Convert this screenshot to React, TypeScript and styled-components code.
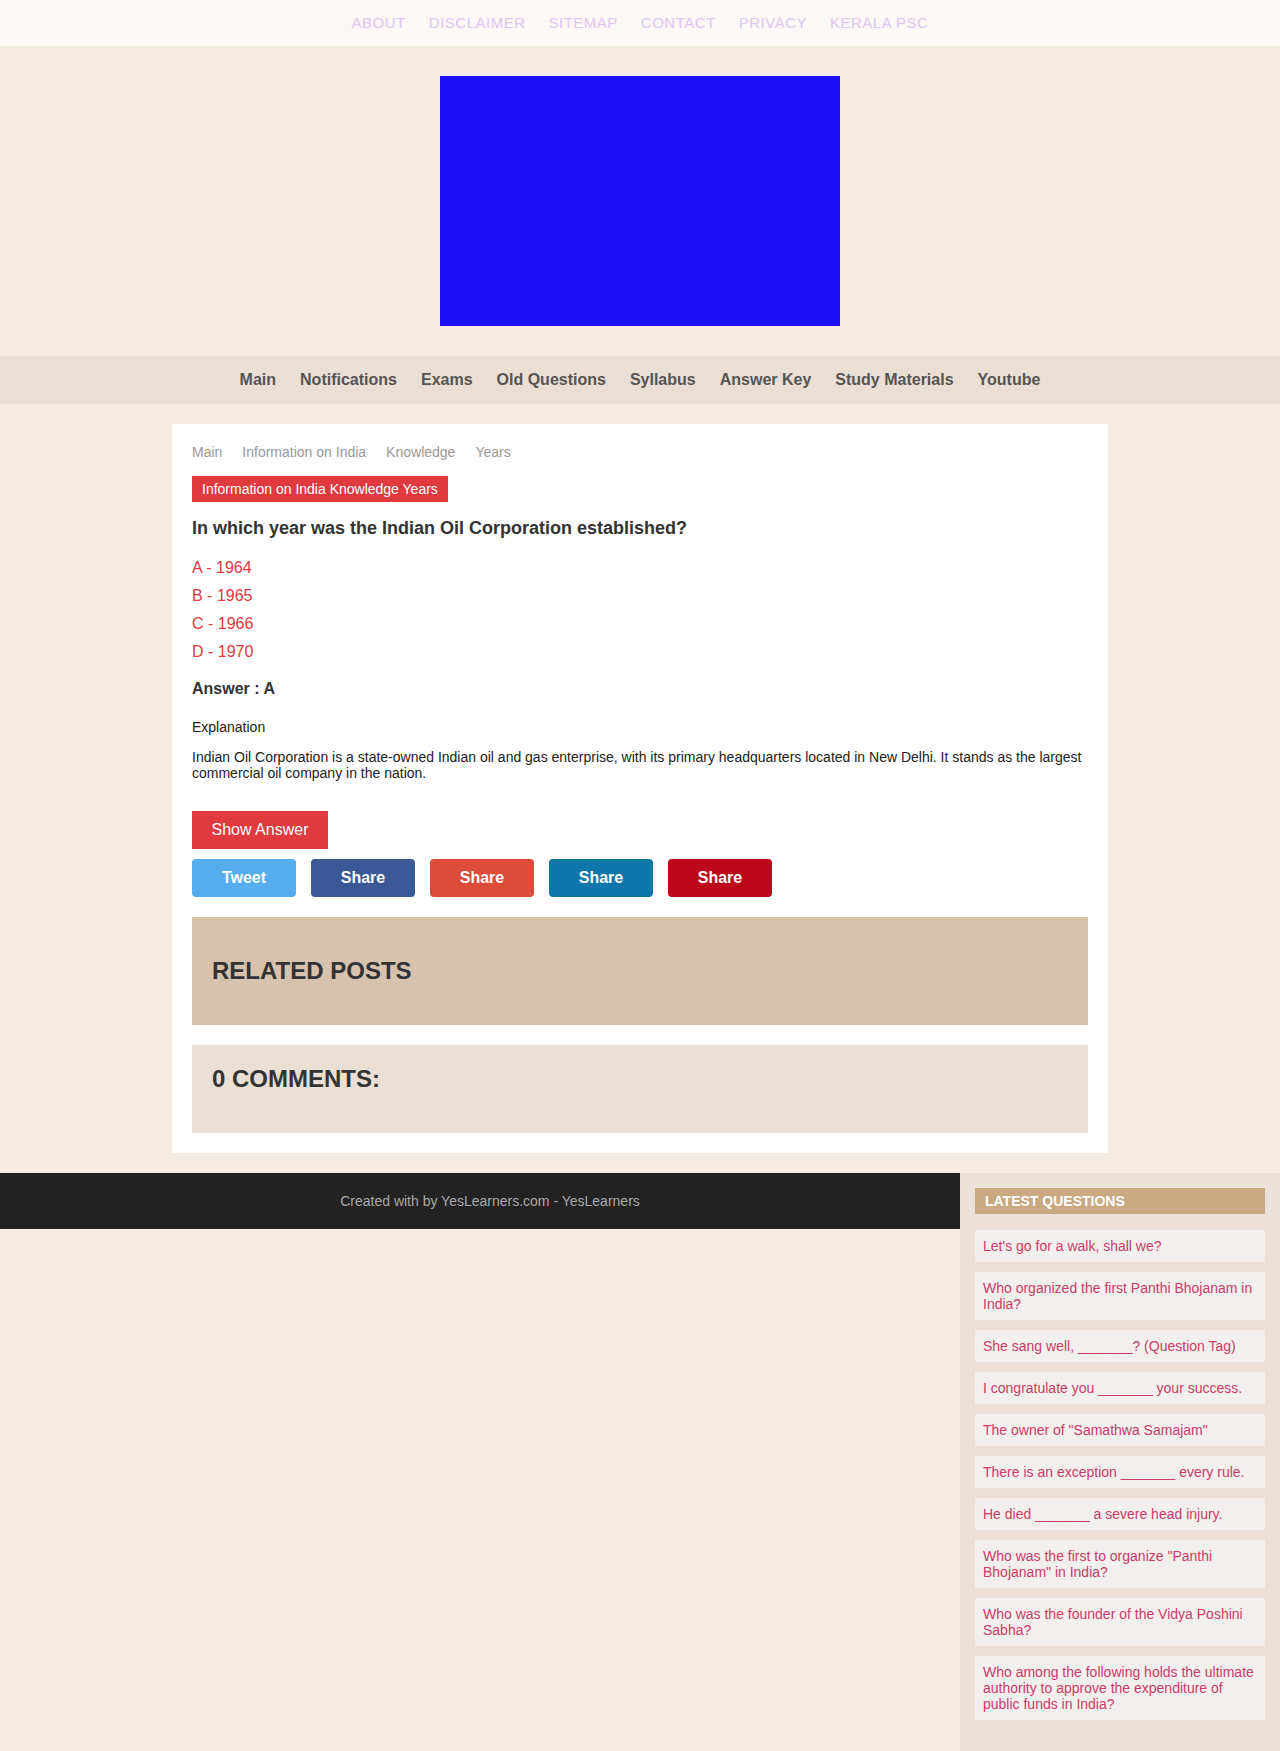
import React from "react";
import styled, { createGlobalStyle } from "styled-components";

const topLinks = ["About", "Disclaimer", "Sitemap", "Contact", "Privacy", "Kerala PSC"];
const mainLinks = ["Main", "Notifications", "Exams", "Old Questions", "Syllabus", "Answer Key", "Study Materials", "Youtube"];
const crumbs = ["Main", "Information on India", "Knowledge", "Years"];
const options = ["A - 1964", "B - 1965", "C - 1966", "D - 1970"];

const shares = [
  { label: "Tweet", color: "#55acee" },
  { label: "Share", color: "#3b5998" },
  { label: "Share", color: "#dd4b39" },
  { label: "Share", color: "#0e76a8" },
  { label: "Share", color: "#bd081c" },
];

const latest = [
  "Let's go for a walk, shall we?",
  "Who organized the first Panthi Bhojanam in India?",
  "She sang well, _______? (Question Tag)",
  "I congratulate you _______ your success.",
  "The owner of \"Samathwa Samajam\"",
  "There is an exception _______ every rule.",
  "He died _______ a severe head injury.",
  "Who was the first to organize \"Panthi Bhojanam\" in India?",
  "Who was the founder of the Vidya Poshini Sabha?",
  "Who among the following holds the ultimate authority to approve the expenditure of public funds in India?",
];

const App = (): React.ReactElement => {
  return (
    <>
      <GlobalStyle />
      <TopBar>
        {topLinks.map((l) => (
          <TopLink key={l} href="#">{l}</TopLink>
        ))}
      </TopBar>

      <AdArea>
        <AdBox />
      </AdArea>

      <MainNav>
        {mainLinks.map((l) => (
          <NavLink key={l} href="#">{l}</NavLink>
        ))}
      </MainNav>

      <Card>
        <Crumbs>
          {crumbs.map((c) => (
            <Crumb key={c} href="#">{c}</Crumb>
          ))}
        </Crumbs>
        <Tag>Information on India Knowledge Years</Tag>
        <Question>In which year was the Indian Oil Corporation established?</Question>
        <Options>
          {options.map((o) => (
            <Option key={o}>{o}</Option>
          ))}
        </Options>
        <Answer>Answer : A</Answer>
        <ExplainTitle>Explanation</ExplainTitle>
        <ExplainText>
          Indian Oil Corporation is a state-owned Indian oil and gas enterprise, with its primary headquarters located in New Delhi. It stands as the largest commercial oil company in the nation.
        </ExplainText>
        <ShowButton>Show Answer</ShowButton>
        <ShareRow>
          {shares.map((s, i) => (
            <ShareButton key={i} $bg={s.color}>{s.label}</ShareButton>
          ))}
        </ShareRow>
        <Related>
          <BlockTitle>RELATED POSTS</BlockTitle>
        </Related>
        <Comments>
          <BlockTitle>0 COMMENTS:</BlockTitle>
        </Comments>
      </Card>

      <BottomRow>
        <Footer>Created with by YesLearners.com - YesLearners</Footer>
        <Sidebar>
          <SideTitle>LATEST QUESTIONS</SideTitle>
          <SideList>
            {latest.map((q) => (
              <SideItem key={q} href="#">{q}</SideItem>
            ))}
          </SideList>
        </Sidebar>
      </BottomRow>
    </>
  );
};

const GlobalStyle = createGlobalStyle`
  body {
    margin: 0;
    background: #f4ebe2;
    font-family: "Liberation Sans", Arial, sans-serif;
  }
  * { box-sizing: border-box; }
`;

const TopBar = styled.nav`
  height: 46px;
  background: #fcf8f5;
  display: flex;
  justify-content: center;
  align-items: center;
  gap: 23px;
  padding-bottom: 2px;
`;

const TopLink = styled.a`
  font-size: 15px;
  letter-spacing: 0.5px;
  text-transform: uppercase;
  color: #e1c6ef;
  text-decoration: none;
`;

const AdArea = styled.div`
  display: flex;
  justify-content: center;
  padding: 30px 0;
`;

const AdBox = styled.div`
  width: 400px;
  height: 250px;
  background: #1d10f6;
`;

const MainNav = styled.nav`
  height: 48px;
  background: #e9dfd5;
  display: flex;
  justify-content: center;
  align-items: center;
  gap: 24px;
`;

const NavLink = styled.a`
  font-size: 16px;
  font-weight: bold;
  color: #555;
  text-decoration: none;
`;

const Card = styled.main`
  width: 936px;
  margin: 20px auto;
  background: #fff;
  padding: 20px;
`;

const Crumbs = styled.div`
  display: flex;
  gap: 20px;
  line-height: 16px;
  margin-bottom: 16px;
`;

const Crumb = styled.a`
  font-size: 14px;
  color: #999;
  text-decoration: none;
`;

const Tag = styled.span`
  display: inline-block;
  background: #e0393e;
  color: #fff;
  font-size: 14px;
  line-height: 16px;
  padding: 5px 10px;
`;

const Question = styled.h1`
  margin: 15px 0 0;
  font-size: 18px;
  line-height: 22px;
  color: #333;
`;

const Options = styled.div`
  margin-top: 15px;
`;

const Option = styled.div`
  font-size: 16px;
  line-height: 28px;
  color: #e0393e;
`;

const Answer = styled.div`
  margin-top: 13px;
  font-size: 16px;
  line-height: 20px;
  font-weight: bold;
  color: #333;
`;

const ExplainTitle = styled.div`
  margin-top: 20px;
  font-size: 14px;
  line-height: 16px;
  color: #222;
`;

const ExplainText = styled.p`
  margin: 14px 0 0;
  font-size: 14px;
  line-height: 16px;
  color: #222;
`;

const ShowButton = styled.button`
  display: block;
  margin-top: 30px;
  width: 136px;
  height: 38px;
  border: 0;
  background: #e0393e;
  color: #fff;
  font-family: inherit;
  font-size: 16px;
  cursor: pointer;
`;

const ShareRow = styled.div`
  display: flex;
  gap: 15px;
  margin-top: 10px;
`;

const ShareButton = styled.a<{ $bg: string }>`
  width: 104px;
  height: 38px;
  border-radius: 4px;
  background: ${(p) => p.$bg};
  color: #fff;
  font-size: 16px;
  font-weight: bold;
  display: flex;
  align-items: center;
  justify-content: center;
  text-decoration: none;
`;

const Related = styled.section`
  margin-top: 20px;
  height: 108px;
  background: #d7c2ae;
  padding: 0 20px;
  display: flex;
  align-items: center;
`;

const Comments = styled.section`
  margin-top: 20px;
  background: #e9dfd5;
  padding: 20px 20px 40px;
`;

const BlockTitle = styled.h2`
  margin: 0;
  font-size: 24px;
  line-height: 28px;
  color: #333;
`;

const BottomRow = styled.div`
  display: flex;
  align-items: flex-start;
`;

const Footer = styled.footer`
  flex: 1;
  height: 56px;
  background: #222;
  color: #aaa;
  font-size: 14px;
  display: flex;
  align-items: center;
  justify-content: center;
  padding-left: 20px;
`;

const Sidebar = styled.aside`
  width: 320px;
  background: #ebe1d8;
  padding: 15px 15px 31px;
`;

const SideTitle = styled.h3`
  margin: 0;
  height: 26px;
  background: #c8a982;
  color: #fff;
  font-size: 14px;
  font-weight: bold;
  line-height: 26px;
  padding: 0 10px;
`;

const SideList = styled.div`
  margin-top: 16px;
  display: flex;
  flex-direction: column;
  gap: 10px;
`;

const SideItem = styled.a`
  display: block;
  background: #f3efee;
  color: #c93c69;
  font-size: 14px;
  line-height: 16px;
  padding: 8px;
  text-decoration: none;
`;

export default App;
